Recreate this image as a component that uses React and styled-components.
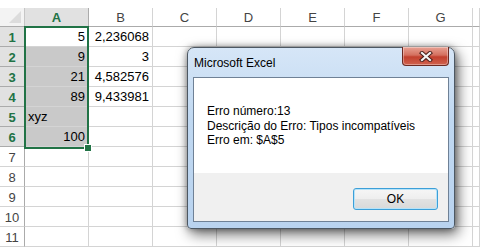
import React from 'react';
import styled, { createGlobalStyle } from 'styled-components';

const GlobalStyle = createGlobalStyle`
  html, body {
    margin: 0;
    padding: 0;
    background: #fff;
  }
  * { box-sizing: border-box; }
`;

const GREEN = '#217346';

const Page = styled.div`
  position: relative;
  width: 480px;
  height: 247px;
  overflow: hidden;
  background: #fff;
  padding-top: 8px;
  font-family: "Liberation Sans", Arial, sans-serif;
`;

const Sheet = styled.div`
  display: grid;
  grid-template-columns: 25px repeat(7, 64px) 1fr;
  grid-template-rows: 19px repeat(11, 20px);
`;

const Corner = styled.div`
  position: relative;
  background: #f3f3f3;
  border-right: 1px solid #c6c6c6;
  border-bottom: 1px solid #ababab;
  &::after {
    content: '';
    position: absolute;
    right: 3px;
    bottom: 3px;
    width: 0;
    height: 0;
    border-left: 12px solid transparent;
    border-bottom: 12px solid #dcdcdc;
  }
`;

const ColHead = styled.div`
  display: flex;
  align-items: center;
  justify-content: center;
  background: ${p => (p.$active ? '#e1e1e1' : '#fff')};
  color: ${p => (p.$active ? GREEN : '#444')};
  font-weight: ${p => (p.$active ? 700 : 400)};
  font-size: 13px;
  border-right: 1px solid ${p => (p.$active ? '#ababab' : '#d4d4d4')};
  border-bottom: 1px solid ${p => (p.$active ? GREEN : '#ababab')};
  padding-top: 1px;
`;

const RowHead = styled.div`
  display: flex;
  align-items: center;
  justify-content: center;
  background: ${p => (p.$active ? '#e1e1e1' : '#fff')};
  color: ${p => (p.$active ? GREEN : '#444')};
  font-weight: ${p => (p.$active ? 700 : 400)};
  font-size: 13px;
  border-right: 1px solid ${p => (p.$active ? GREEN : '#ababab')};
  border-bottom: 1px solid ${p => (p.$active ? '#ababab' : '#d4d4d4')};
  padding-top: 1px;
`;

const Cell = styled.div`
  display: flex;
  align-items: flex-end;
  justify-content: ${p => (p.$num ? 'flex-end' : 'flex-start')};
  padding: 0 3px 2px 3px;
  background: ${p => (p.$sel ? '#c9c9c9' : '#fff')};
  color: #000;
  font-size: 13px;
  border-right: 1px solid #d4d4d4;
  border-bottom: 1px solid #d4d4d4;
  white-space: nowrap;
  overflow: hidden;
`;

const Selection = styled.div`
  position: absolute;
  left: 24px;
  top: 26px;
  width: 65px;
  height: 123px;
  border: 2px solid ${GREEN};
  pointer-events: none;
  &::after {
    content: '';
    position: absolute;
    right: -4px;
    bottom: -4px;
    width: 6px;
    height: 6px;
    background: ${GREEN};
    outline: 1px solid #fff;
  }
`;

const Dialog = styled.div`
  position: absolute;
  left: 187px;
  top: 47px;
  width: 268px;
  height: 182px;
  display: flex;
  flex-direction: column;
  background: linear-gradient(#d6e6f7, #c0d8f1 40%, #b9d3ef);
  border: 1px solid #4d5863;
  border-radius: 7px 7px 4px 4px;
  box-shadow: 3px 5px 14px rgba(0, 0, 0, 0.6), 0 0 6px rgba(0, 0, 0, 0.35);
  font-family: "Liberation Sans", Arial, sans-serif;
`;

const TitleBar = styled.div`
  height: 29px;
  display: flex;
  align-items: flex-start;
  padding: 0 5px 0 6px;
`;

const Title = styled.div`
  flex: 1;
  font-size: 12px;
  color: #000;
  padding-top: 8px;
`;

const CloseButton = styled.div`
  width: 47px;
  height: 19px;
  margin-top: -1px;
  display: flex;
  align-items: center;
  justify-content: center;
  background: linear-gradient(#e8a294, #d4705f 45%, #c2402e 55%, #d0624e);
  border: 1px solid #6b2a22;
  border-top: none;
  border-radius: 0 0 4px 4px;
  box-shadow: inset 0 0 0 1px rgba(255, 255, 255, 0.35);
`;

const Client = styled.div`
  flex: 1;
  margin: 0 5px 6px 5px;
  display: flex;
  flex-direction: column;
  border: 1px solid #6f8196;
  background: #f0f0f0;
`;

const Message = styled.div`
  height: 95px;
  background: #fff;
  padding: 26px 0 0 13px;
  font-size: 12px;
  line-height: 14.5px;
  color: #000;
`;

const Footer = styled.div`
  flex: 1;
  display: flex;
  justify-content: flex-end;
  padding: 15px 10px 0 0;
`;

const OkButton = styled.div`
  width: 85px;
  height: 22px;
  display: flex;
  align-items: center;
  justify-content: center;
  font-size: 12px;
  color: #000;
  border: 1px solid #3c9fd8;
  border-radius: 3px;
  background: linear-gradient(#f6f6f6, #eeeeee 50%, #e2e2e2 51%, #d9d9d9);
  box-shadow: inset 0 0 0 1px #b6e3f9;
`;

const columns = ['A', 'B', 'C', 'D', 'E', 'F', 'G', ''];

const data = [
  ['5', '2,236068'],
  ['9', '3'],
  ['21', '4,582576'],
  ['89', '9,433981'],
  ['xyz', ''],
  ['100', ''],
  ['', ''], ['', ''], ['', ''], ['', ''], ['', '']
];

function CloseX() {
  return (
    <svg width="14" height="11" viewBox="0 0 14 11">
      <path
        d="M3 2 L11 9 M11 2 L3 9"
        fill="none"
        stroke="#4a1f1a"
        strokeWidth="4.2"
        strokeLinecap="square"
      />
      <path
        d="M3 2 L11 9 M11 2 L3 9"
        fill="none"
        stroke="#f4f4f4"
        strokeWidth="2.2"
        strokeLinecap="square"
      />
    </svg>
  );
}

export default function App() {
  return (
    <Page>
      <GlobalStyle />
      <Sheet>
        <Corner />
        {columns.map((c, i) => (
          <ColHead key={i} $active={c === 'A'}>{c}</ColHead>
        ))}
        {data.map((row, r) => (
          <React.Fragment key={r}>
            <RowHead $active={r < 6}>{r + 1}</RowHead>
            <Cell $num={row[0] !== 'xyz'} $sel={r > 0 && r < 6}>{row[0]}</Cell>
            <Cell $num>{row[1]}</Cell>
            {[0, 1, 2, 3, 4, 5].map(k => <Cell key={k} />)}
          </React.Fragment>
        ))}
      </Sheet>
      <Selection />
      <Dialog>
        <TitleBar>
          <Title>Microsoft Excel</Title>
          <CloseButton><CloseX /></CloseButton>
        </TitleBar>
        <Client>
          <Message>
            <div>Erro número:13</div>
            <div>Descrição do Erro: Tipos incompatíveis</div>
            <div>Erro em: $A$5</div>
          </Message>
          <Footer>
            <OkButton>OK</OkButton>
          </Footer>
        </Client>
      </Dialog>
    </Page>
  );
}
